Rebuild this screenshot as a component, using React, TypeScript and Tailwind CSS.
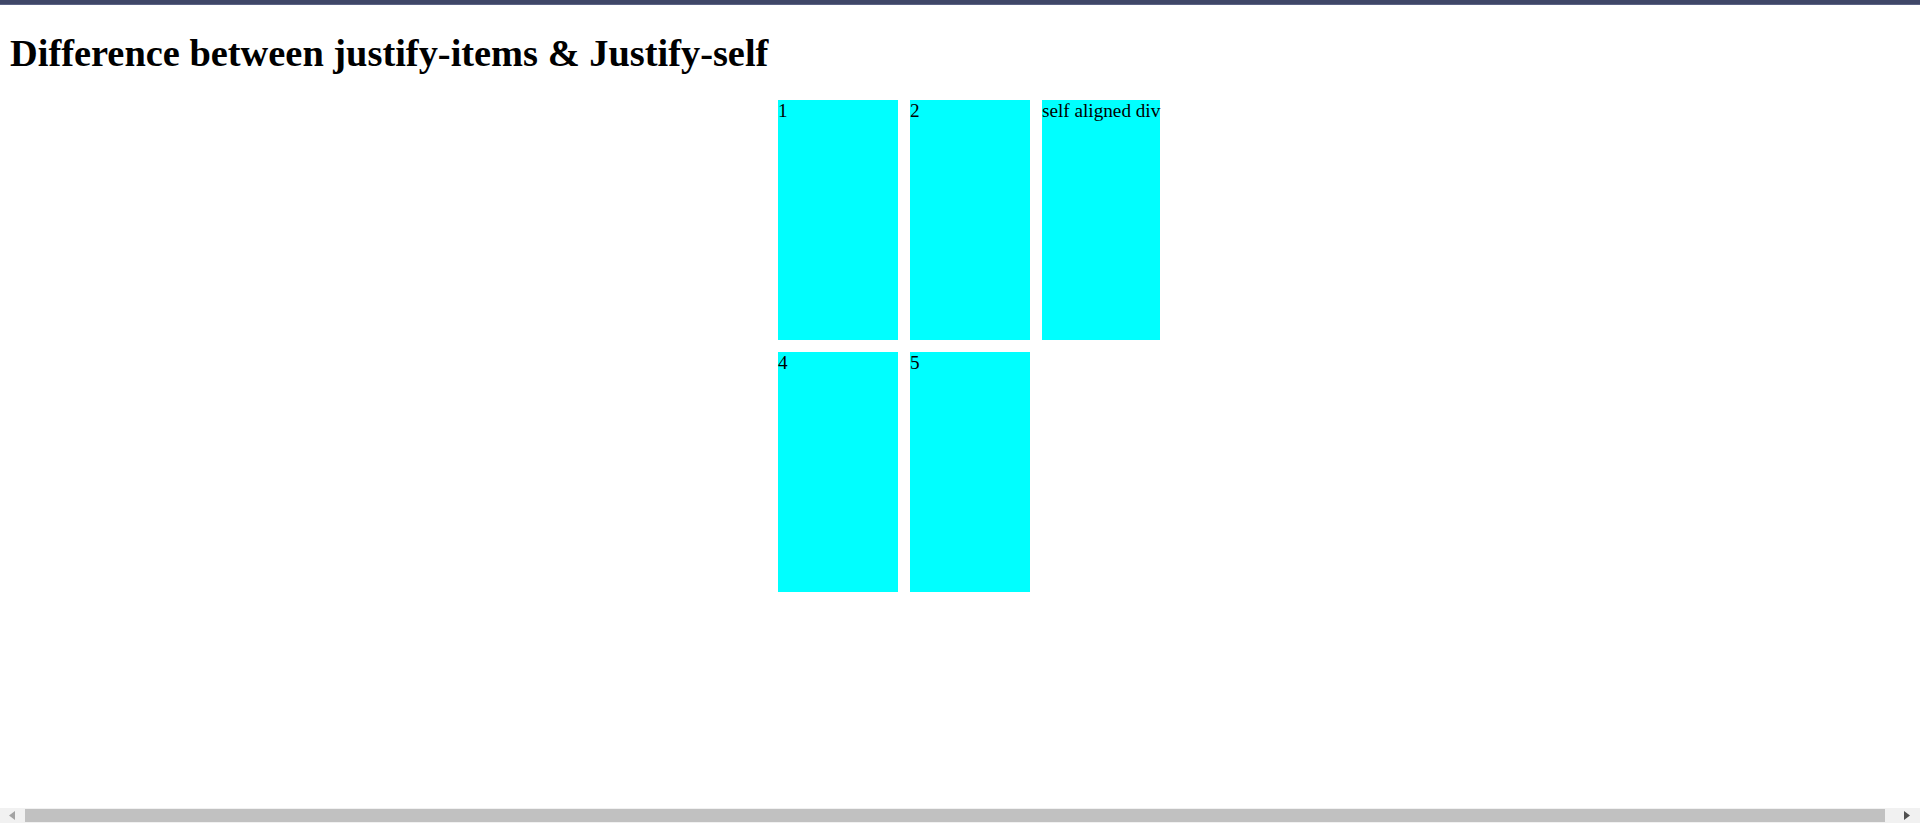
import React from "react";

export default function App() {
  return (
    <div
      className="flex h-[823px] w-[1920px] flex-col overflow-hidden bg-white text-black"
      style={{ fontFamily: '"Liberation Serif", "Times New Roman", serif' }}
    >
      <div className="h-[4px] w-full shrink-0 bg-[#3f4768]" />
      <div className="h-[1px] w-full shrink-0 bg-[#5b6385]" />
      <div className="flex-1">
        <h1 className="mt-[26px] mb-[25px] pl-[10px] text-[38.4px] font-bold leading-[44px]">
          Difference between justify-items &amp; Justify-self
        </h1>
        <div className="ml-[778px] grid grid-cols-[120px_120px_120px] gap-[12px] text-[19.2px] leading-[22px]">
          <div className="h-[240px] bg-[#00ffff]">1</div>
          <div className="h-[240px] bg-[#00ffff]">2</div>
          <div className="h-[240px] justify-self-start whitespace-nowrap bg-[#00ffff]">
            self aligned div
          </div>
          <div className="h-[240px] bg-[#00ffff]">4</div>
          <div className="h-[240px] bg-[#00ffff]">5</div>
        </div>
      </div>
      <div className="flex h-[15px] w-full shrink-0 items-stretch bg-[#f1f1f1]">
        <div className="flex w-[25px] items-center pl-[9px]">
          <svg width="6" height="9" viewBox="0 0 6 9">
            <polygon points="6,0 6,9 0,4.5" fill="#a3a3a3" />
          </svg>
        </div>
        <div className="my-[1px] flex-1 bg-[#c1c1c1]" />
        <div className="flex w-[35px] items-center justify-end pr-[10px]">
          <svg width="6" height="9" viewBox="0 0 6 9">
            <polygon points="0,0 0,9 6,4.5" fill="#505050" />
          </svg>
        </div>
      </div>
    </div>
  );
}
